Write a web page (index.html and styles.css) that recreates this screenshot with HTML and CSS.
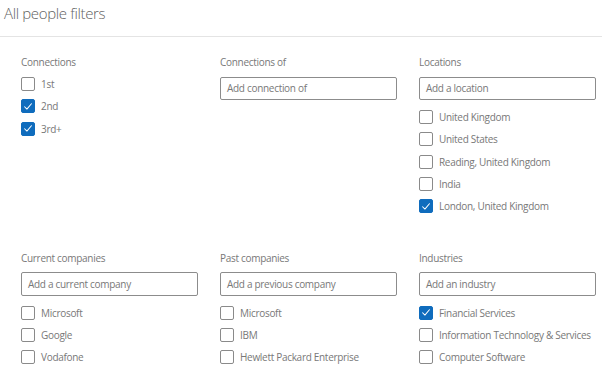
FILE: index.html
```html
<!DOCTYPE html>
<html>
<head>
<meta charset="utf-8">
<link rel="stylesheet" href="styles.css">
</head>
<body>
<div class="header">All people filters</div>
<div class="grid">
  <div class="section">
    <div class="label">Connections</div>
    <div class="list tight">
      <div class="item"><span class="box"></span><span>1st</span></div>
      <div class="item"><span class="box on"><svg viewBox="0 0 14 14"><path d="M3 7.3 L5.7 10 L11 3.8"/></svg></span><span>2nd</span></div>
      <div class="item"><span class="box on"><svg viewBox="0 0 14 14"><path d="M3 7.3 L5.7 10 L11 3.8"/></svg></span><span>3rd+</span></div>
    </div>
  </div>
  <div class="section">
    <div class="label">Connections of</div>
    <div class="input">Add connection of</div>
  </div>
  <div class="section">
    <div class="label">Locations</div>
    <div class="input">Add a location</div>
    <div class="list">
      <div class="item"><span class="box"></span><span>United Kingdom</span></div>
      <div class="item"><span class="box"></span><span>United States</span></div>
      <div class="item"><span class="box"></span><span>Reading, United Kingdom</span></div>
      <div class="item"><span class="box"></span><span>India</span></div>
      <div class="item"><span class="box on"><svg viewBox="0 0 14 14"><path d="M3 7.3 L5.7 10 L11 3.8"/></svg></span><span>London, United Kingdom</span></div>
    </div>
  </div>
  <div class="section row2">
    <div class="label">Current companies</div>
    <div class="input">Add a current company</div>
    <div class="list">
      <div class="item"><span class="box"></span><span>Microsoft</span></div>
      <div class="item"><span class="box"></span><span>Google</span></div>
      <div class="item"><span class="box"></span><span>Vodafone</span></div>
    </div>
  </div>
  <div class="section row2">
    <div class="label">Past companies</div>
    <div class="input">Add a previous company</div>
    <div class="list">
      <div class="item"><span class="box"></span><span>Microsoft</span></div>
      <div class="item"><span class="box"></span><span>IBM</span></div>
      <div class="item"><span class="box"></span><span>Hewlett Packard Enterprise</span></div>
    </div>
  </div>
  <div class="section row2">
    <div class="label">Industries</div>
    <div class="input">Add an industry</div>
    <div class="list">
      <div class="item"><span class="box on"><svg viewBox="0 0 14 14"><path d="M3 7.3 L5.7 10 L11 3.8"/></svg></span><span>Financial Services</span></div>
      <div class="item"><span class="box"></span><span>Information Technology &amp; Services</span></div>
      <div class="item"><span class="box"></span><span>Computer Software</span></div>
    </div>
  </div>
</div>
</body>
</html>
```
FILE: styles.css
```css
html, body {
  margin: 0;
  padding: 0;
  background: #ffffff;
}
body {
  width: 602px;
  height: 372px;
  overflow: hidden;
  font-family: "Open Sans", "Noto Sans", sans-serif;
  color: #787878;
}
.header {
  height: 37px;
  box-sizing: border-box;
  padding: 3px 0 0 4px;
  font-size: 15px;
  line-height: 20px;
  font-weight: 300;
  letter-spacing: -0.35px;
  color: #5f5f5f;
  border-bottom: 1px solid #e4e4e4;
}
.grid {
  display: grid;
  grid-template-columns: 177px 177px 177px;
  column-gap: 22px;
  row-gap: 34px;
  padding: 18px 0 0 21px;
}
.section {
  display: flex;
  flex-direction: column;
}
.label {
  font-size: 10px;
  line-height: 14px;
  letter-spacing: -0.3px;
  color: #787878;
  margin-bottom: 8px;
  white-space: nowrap;
}
.row2 .label {
  margin-bottom: 7px;
}
.input {
  height: 23px;
  box-sizing: border-box;
  border: 1px solid #8c8c8c;
  border-radius: 2px;
  padding: 0 6px;
  font-size: 10px;
  line-height: 21px;
  letter-spacing: -0.3px;
  color: #787878;
  white-space: nowrap;
}
.row2 .input {
  height: 24px;
  line-height: 22px;
}
.list {
  display: flex;
  flex-direction: column;
  margin-top: 6px;
}
.row2 .list {
  margin-top: 5px;
}
.list.tight {
  margin-top: -4px;
}
.item {
  height: 22.3px;
  display: flex;
  align-items: center;
  gap: 6px;
  font-size: 10px;
  letter-spacing: -0.3px;
  color: #787878;
  white-space: nowrap;
}
.box {
  width: 14px;
  height: 14px;
  box-sizing: border-box;
  border: 1px solid #8a8a8a;
  border-radius: 2px;
  flex: none;
  display: flex;
  align-items: center;
  justify-content: center;
}
.box.on {
  background: #0f6cbd;
  border-color: #0f6cbd;
}
.box svg {
  width: 13px;
  height: 13px;
}
.box svg path {
  fill: none;
  stroke: #ffffff;
  stroke-width: 1.2;
  stroke-linecap: round;
  stroke-linejoin: round;
}
```
